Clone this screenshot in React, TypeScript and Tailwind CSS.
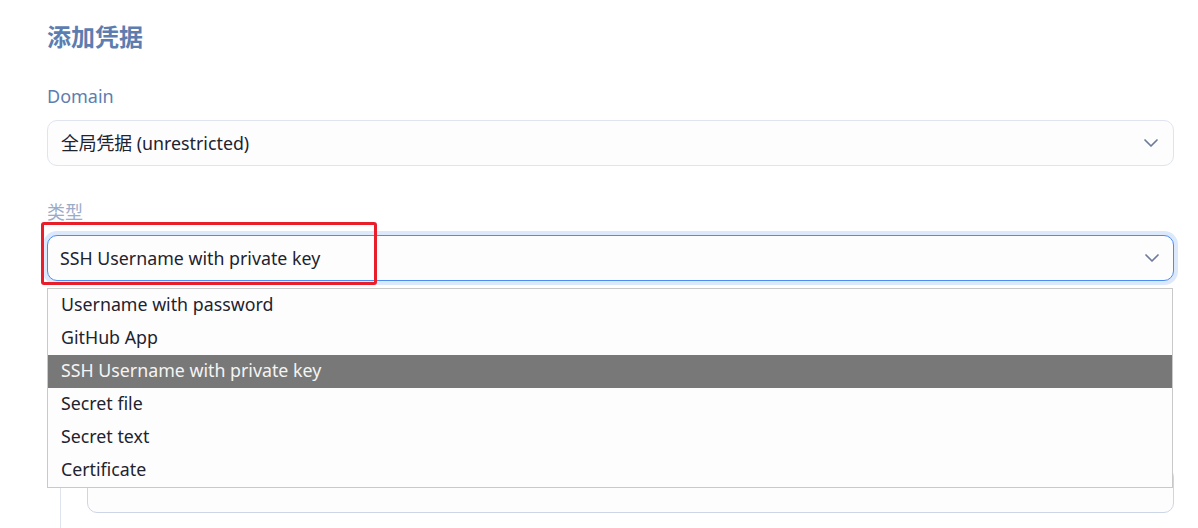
import { ChevronDown } from "lucide-react";

const options = [
  "Username with password",
  "GitHub App",
  "SSH Username with private key",
  "Secret file",
  "Secret text",
  "Certificate",
];

const font = { fontFamily: '"Noto Sans", "Noto Sans CJK SC", sans-serif' };

export default function App() {
  return (
    <div className="w-[1198px] h-[528px] overflow-hidden bg-white pl-[47px] pr-[24px] pt-[21px]" style={font}>
      <h1 className="h-[32px] leading-[32px] text-[24px] font-bold text-[#5d7db0]">添加凭据</h1>

      <label className="block mt-[31px] h-[24px] leading-[24px] text-[18px] text-[#5d7db0]">Domain</label>
      <div className="mt-[12px] h-[46px] flex items-center justify-between rounded-[10px] border border-[#dfe4ee] bg-[#fdfdfe] pl-[13px] pr-[10px]">
        <span className="text-[17.8px] text-[#1e2330]">全局凭据 (unrestricted)</span>
        <ChevronDown className="w-[24px] h-[24px] text-[#6b7b99]" strokeWidth={1.7} />
      </div>

      <label className="block mt-[34px] h-[24px] leading-[24px] text-[18px] text-[#9bacc9]">类型</label>
      <div className="relative mt-[11px]">
        <div className="h-[46px] flex items-center justify-between rounded-[10px] border-[1.5px] border-[#4a8ef2] ring-4 ring-[#dce9fc] bg-[#fdfdfe] pl-[12px] pr-[9px]">
          <span className="text-[17.8px] text-[#1e2330]">SSH Username with private key</span>
          <ChevronDown className="w-[24px] h-[24px] text-[#6b7b99]" strokeWidth={1.7} />
        </div>
        <div className="absolute left-[-6px] top-[-13px] w-[336px] h-[63px] border-[3px] border-[#e81e2a] rounded-[3px] pointer-events-none" />

        <ul className="absolute left-0 top-[53px] w-[1126px] z-10 border border-[#c9c9c9] bg-[#fdfdfd]">
          {options.map((o) => (
            <li
              key={o}
              className={
                o === "SSH Username with private key"
                  ? "h-[33px] leading-[31px] pl-[13px] text-[17.8px] bg-[#787878] text-[#f4f4f4]"
                  : "h-[33px] leading-[31px] pl-[13px] text-[17.8px] text-[#1e2330]"
              }
            >
              {o}
            </li>
          ))}
        </ul>
      </div>

      <div className="mt-[20px] ml-[13px] border-l border-[#dfe4ee] pl-[26px] pt-[166px]">
        <div className="h-[46px] rounded-[10px] border border-[#cdd6e6] bg-[#fdfdfe]" />
        <div className="h-[40px]" />
      </div>
    </div>
  );
}
